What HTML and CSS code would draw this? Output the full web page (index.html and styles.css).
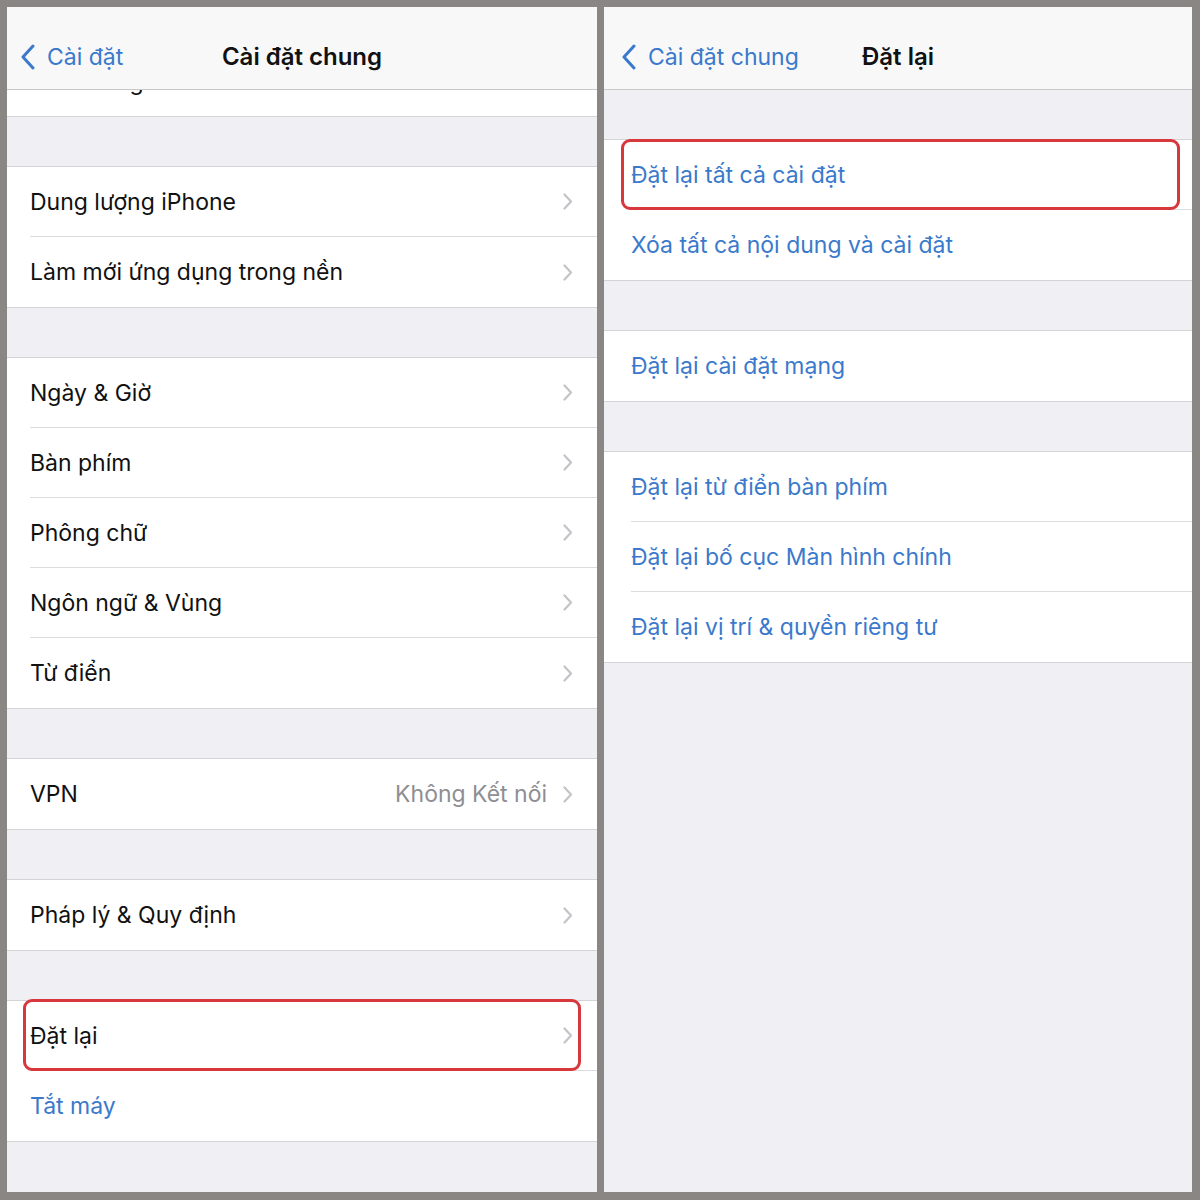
FILE: index.html
```html
<!DOCTYPE html>
<html lang="vi">
<head>
  <meta charset="UTF-8">
  <meta name="viewport" content="width=device-width, initial-scale=1.0">
  <title>Cài đặt chung - Đặt lại</title>
  <link rel="stylesheet" href="styles.css">
</head>
<body>
  <div class="frame">
    <!-- Cài đặt chung -->
    <div class="screen screen-left">
      <div class="navbar">
        <div class="nav-back">
          <svg class="back-icon" width="15" height="26" viewBox="0 0 15 26"><path d="M13 2 L3 13 L13 24" /></svg>
          <span>Cài đặt</span>
        </div>
        <div class="nav-title">Cài đặt chung</div>
        <div></div>
      </div>

      <div class="group group-cut">
        <div class="cut-text">Hình trong hình</div>
      </div>

      <div class="group">
        <div class="row"><div class="row-inner"><span class="label">Dung lượng iPhone</span><svg class="chevron" width="10" height="17" viewBox="0 0 10 17"><path d="M1.5 1.5 L8 8.5 L1.5 15.5" /></svg></div></div>
        <div class="row"><div class="row-inner"><span class="label">Làm mới ứng dụng trong nền</span><svg class="chevron" width="10" height="17" viewBox="0 0 10 17"><path d="M1.5 1.5 L8 8.5 L1.5 15.5" /></svg></div></div>
      </div>

      <div class="group">
        <div class="row"><div class="row-inner"><span class="label">Ngày &amp; Giờ</span><svg class="chevron" width="10" height="17" viewBox="0 0 10 17"><path d="M1.5 1.5 L8 8.5 L1.5 15.5" /></svg></div></div>
        <div class="row"><div class="row-inner"><span class="label">Bàn phím</span><svg class="chevron" width="10" height="17" viewBox="0 0 10 17"><path d="M1.5 1.5 L8 8.5 L1.5 15.5" /></svg></div></div>
        <div class="row"><div class="row-inner"><span class="label">Phông chữ</span><svg class="chevron" width="10" height="17" viewBox="0 0 10 17"><path d="M1.5 1.5 L8 8.5 L1.5 15.5" /></svg></div></div>
        <div class="row"><div class="row-inner"><span class="label">Ngôn ngữ &amp; Vùng</span><svg class="chevron" width="10" height="17" viewBox="0 0 10 17"><path d="M1.5 1.5 L8 8.5 L1.5 15.5" /></svg></div></div>
        <div class="row"><div class="row-inner"><span class="label">Từ điển</span><svg class="chevron" width="10" height="17" viewBox="0 0 10 17"><path d="M1.5 1.5 L8 8.5 L1.5 15.5" /></svg></div></div>
      </div>

      <div class="group">
        <div class="row"><div class="row-inner"><span class="label">VPN</span><span class="value">Không Kết nối</span><svg class="chevron" width="10" height="17" viewBox="0 0 10 17"><path d="M1.5 1.5 L8 8.5 L1.5 15.5" /></svg></div></div>
      </div>

      <div class="group">
        <div class="row"><div class="row-inner"><span class="label">Pháp lý &amp; Quy định</span><svg class="chevron" width="10" height="17" viewBox="0 0 10 17"><path d="M1.5 1.5 L8 8.5 L1.5 15.5" /></svg></div></div>
      </div>

      <div class="group">
        <div class="row row-marked mark-left"><div class="row-inner"><span class="label">Đặt lại</span><svg class="chevron" width="10" height="17" viewBox="0 0 10 17"><path d="M1.5 1.5 L8 8.5 L1.5 15.5" /></svg></div></div>
        <div class="row"><div class="row-inner"><span class="label link">Tắt máy</span></div></div>
      </div>
    </div>

    <!-- Đặt lại -->
    <div class="screen screen-right">
      <div class="navbar">
        <div class="nav-back">
          <svg class="back-icon" width="15" height="26" viewBox="0 0 15 26"><path d="M13 2 L3 13 L13 24" /></svg>
          <span>Cài đặt chung</span>
        </div>
        <div class="nav-title">Đặt lại</div>
        <div></div>
      </div>

      <div class="group">
        <div class="row row-marked mark-right"><div class="row-inner"><span class="label link">Đặt lại tất cả cài đặt</span></div></div>
        <div class="row"><div class="row-inner"><span class="label link">Xóa tất cả nội dung và cài đặt</span></div></div>
      </div>

      <div class="group">
        <div class="row"><div class="row-inner"><span class="label link">Đặt lại cài đặt mạng</span></div></div>
      </div>

      <div class="group">
        <div class="row"><div class="row-inner"><span class="label link">Đặt lại từ điển bàn phím</span></div></div>
        <div class="row"><div class="row-inner"><span class="label link">Đặt lại bố cục Màn hình chính</span></div></div>
        <div class="row"><div class="row-inner"><span class="label link">Đặt lại vị trí &amp; quyền riêng tư</span></div></div>
      </div>
    </div>
  </div>
</body>
</html>
```

FILE: styles.css
```css
* {
  box-sizing: border-box;
}
body {
  margin: 0;
  background-color: #8a8683;
  font-family: Inter, "Noto Sans", sans-serif;
}
.frame {
  display: flex;
  gap: 7px;
  width: 1200px;
  height: 1200px;
  padding: 7px 8px 8px 7px;
}
.screen {
  display: flex;
  flex-direction: column;
  background-color: #efeff4;
  overflow: hidden;
}
.screen-left {
  width: 590px;
}
.screen-right {
  width: 588px;
}

/* top bar */
.navbar {
  display: grid;
  grid-template-columns: 1fr auto 1fr;
  align-items: center;
  height: 83px;
  padding-top: 32px;
  padding-bottom: 15px;
  background-color: #f8f8f8;
  border-bottom: 1px solid #c9c9cc;
}
.nav-back {
  display: flex;
  align-items: center;
  gap: 12px;
  padding-left: 13px;
  color: #3a79cb;
  font-size: 23px;
}
.screen-right .nav-back {
  padding-left: 17px;
}
.back-icon path {
  fill: none;
  stroke: #3a79cb;
  stroke-width: 3;
  stroke-linecap: round;
  stroke-linejoin: round;
}
.nav-title {
  font-size: 24px;
  font-weight: 600;
  color: #111111;
}

/* grouped list */
.group {
  background-color: #ffffff;
  border-top: 1px solid #d3d3d8;
  border-bottom: 1px solid #d3d3d8;
  margin-top: 49px;
}
.group-cut {
  margin-top: 0;
  border-top: none;
  height: 27px;
  overflow: hidden;
}
.cut-text {
  padding-left: 23px;
  margin-top: -21px;
  font-size: 23px;
  line-height: 26px;
  color: #111111;
}
.row {
  position: relative;
  height: 70px;
  padding-left: 23px;
  display: flex;
}
.screen-right .row {
  padding-left: 27px;
}
.row-inner {
  flex: 1;
  display: flex;
  align-items: center;
  padding-right: 24px;
  border-bottom: 1px solid #dcdce0;
}
.row:last-child .row-inner {
  border-bottom: none;
}
.label {
  flex: 1;
  font-size: 23px;
  color: #111111;
}
.label.link {
  color: #3a79cb;
}
.value {
  font-size: 23px;
  color: #8e8e93;
  margin-right: 16px;
}
.chevron path {
  fill: none;
  stroke: #c3c3c8;
  stroke-width: 2.2;
  stroke-linecap: round;
  stroke-linejoin: round;
}

/* red highlight frame */
.row-marked::after {
  content: "";
  position: absolute;
  border: 3px solid #d8373c;
  border-radius: 9px;
  pointer-events: none;
}
.mark-left::after {
  left: 16px;
  right: 16px;
  top: -2px;
  bottom: 0;
}
.mark-right::after {
  left: 17px;
  right: 12px;
  top: -1px;
  bottom: 0;
}
```
